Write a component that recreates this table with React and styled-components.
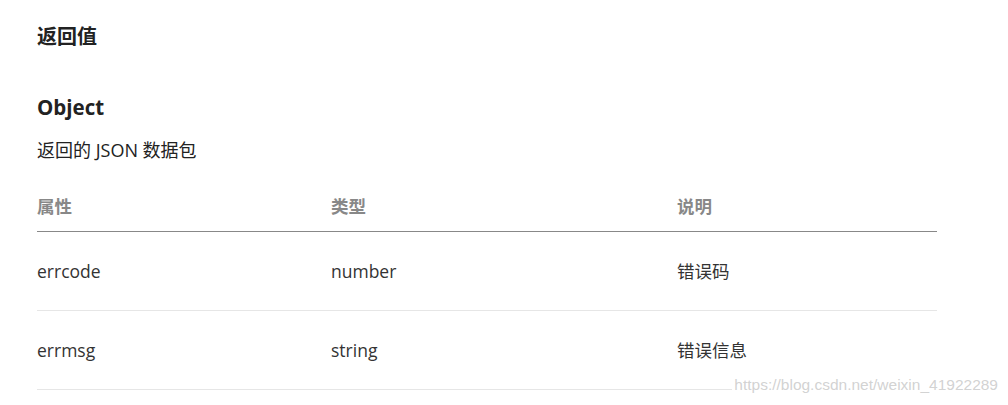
import React from 'react'
import styled, { createGlobalStyle } from 'styled-components'

const GlobalStyle = createGlobalStyle`
  html, body {
    margin: 0;
    background: #fff;
  }
  body {
    font-family: "Open Sans", "Noto Sans CJK SC", sans-serif;
    color: #222;
  }
`

const Page = styled.div`
  position: relative;
  width: 1008px;
  height: 405px;
  overflow: hidden;
  padding: 24px 0 0 37px;
  box-sizing: border-box;
`

const Title = styled.h3`
  margin: 0;
  font-size: 20px;
  line-height: 26px;
  font-weight: 700;
`

const SubTitle = styled.h4`
  margin: 43px 0 0;
  font-size: 20.5px;
  line-height: 28px;
  font-weight: 700;
`

const Desc = styled.p`
  margin: 16px 0 0;
  font-size: 18px;
  line-height: 26px;
`

const Table = styled.table`
  width: 900px;
  border-collapse: collapse;
  table-layout: fixed;
  font-size: 17.5px;
  line-height: 26px;
`

const Head = styled.th`
  text-align: left;
  font-weight: 700;
  color: #888;
  padding: 30px 0 12px;
  border-bottom: 1px solid #888;
  width: ${p => p.w}px;
`

const Cell = styled.td`
  padding: 26px 0;
  border-bottom: 1px solid #e6e6e6;
  color: #333;
`

const Watermark = styled.div`
  position: absolute;
  right: 10px;
  top: 376px;
  font-family: "Liberation Sans", Arial, sans-serif;
  font-size: 15.5px;
  color: rgba(205, 205, 205, 0.9);
  background: #fff;
  padding-left: 2px;
`

const rows = [
  { name: 'errcode', type: 'number', note: '错误码' },
  { name: 'errmsg', type: 'string', note: '错误信息' },
]

export default function App() {
  return (
    <Page>
      <GlobalStyle />
      <Title>返回值</Title>
      <SubTitle>Object</SubTitle>
      <Desc>返回的 JSON 数据包</Desc>
      <Table>
        <thead>
          <tr>
            <Head w={294}>属性</Head>
            <Head w={346}>类型</Head>
            <Head w={260}>说明</Head>
          </tr>
        </thead>
        <tbody>
          {rows.map(r => (
            <tr key={r.name}>
              <Cell>{r.name}</Cell>
              <Cell>{r.type}</Cell>
              <Cell>{r.note}</Cell>
            </tr>
          ))}
        </tbody>
      </Table>
      <Watermark>https://blog.csdn.net/weixin_41922289</Watermark>
    </Page>
  )
}
